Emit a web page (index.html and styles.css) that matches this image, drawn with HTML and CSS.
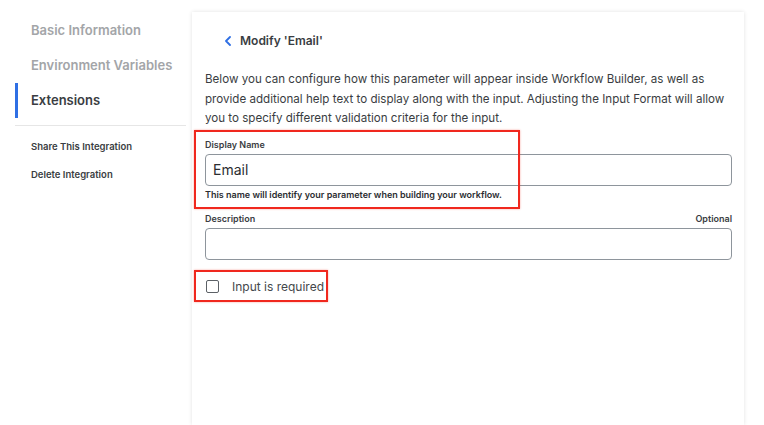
FILE: index.html
```html
<!DOCTYPE html>
<html lang="en">
<head>
    <meta charset="UTF-8">
    <title>Modify 'Email'</title>
    <link rel="stylesheet" href="styles.css">
</head>
<body>
    <div class="layout">
        <aside class="sidebar">
            <nav class="nav">
                <a class="nav-item">Basic Information</a>
                <a class="nav-item">Environment Variables</a>
                <a class="nav-item active">Extensions</a>
            </nav>
            <div class="divider"></div>
            <div class="actions">
                <a class="action-link">Share This Integration</a>
                <a class="action-link">Delete Integration</a>
            </div>
        </aside>

        <main class="card">
            <div class="card-header">
                <span class="back-btn">
                    <svg width="8" height="10" viewBox="0 0 8 10"><path d="M6 1 L2 5 L6 9" fill="none" stroke="#2f6fe4" stroke-width="1.8" stroke-linecap="round" stroke-linejoin="round"/></svg>
                </span>
                <h2>Modify 'Email'</h2>
            </div>
            <p class="intro">Below you can configure how this parameter will appear inside Workflow Builder, as well as provide additional help text to display along with the input. Adjusting the Input Format will allow you to specify different validation criteria for the input.</p>

            <div class="form-group">
                <div class="label-row">
                    <label for="display-name">Display Name</label>
                </div>
                <input type="text" id="display-name" value="Email">
                <div class="hint">This name will identify your parameter when building your workflow.</div>
                <div class="highlight highlight-name"></div>
            </div>

            <div class="form-group second">
                <div class="label-row">
                    <label for="description">Description</label>
                    <span class="optional">Optional</span>
                </div>
                <input type="text" id="description">
            </div>

            <div class="check-row">
                <span class="checkbox"></span>
                <span class="check-label">Input is required</span>
                <div class="highlight highlight-check"></div>
            </div>
        </main>
    </div>
</body>
</html>
```

FILE: styles.css
```css
body {
    margin: 0;
    background-color: #fff;
    font-family: Inter, "Liberation Sans", Arial, sans-serif;
    color: #333;
}
.layout {
    display: flex;
    height: 425px;
    overflow: hidden;
}
.sidebar {
    width: 171px;
    padding: 13px 0 0 15px;
    flex-shrink: 0;
}
.nav-item {
    display: block;
    height: 35px;
    line-height: 35px;
    padding-left: 13px;
    font-size: 13px;
    font-weight: 600;
    color: #a3a5a8;
    border-left: 3px solid transparent;
}
.nav-item.active {
    color: #3a3d42;
    border-left-color: #2f6fe4;
}
.divider {
    height: 1px;
    background-color: #e6e6e6;
    margin-top: 7px;
}
.actions {
    padding: 7px 0 0 16px;
}
.action-link {
    display: block;
    height: 28px;
    line-height: 28px;
    font-size: 9.5px;
    font-weight: 600;
    color: #3a3d42;
}
.card {
    position: relative;
    margin: 12px 0 0 6px;
    width: 527px;
    padding: 0 12px 0 13px;
    background-color: #fff;
    box-shadow: 0 0 4px rgba(0, 0, 0, 0.12);
}
.card-header {
    display: flex;
    align-items: center;
    height: 29px;
    margin-top: 14px;
    padding-left: 19px;
}
.back-btn {
    display: flex;
    margin-right: 8px;
}
.card-header h2 {
    margin: 0;
    font-size: 12px;
    font-weight: 600;
    color: #3a3d42;
}
.intro {
    margin: 15px 0 0;
    font-size: 11.6px;
    line-height: 19.5px;
    color: #3a3d42;
}
.form-group {
    position: relative;
    margin-top: 9px;
}
.form-group.second {
    margin-top: 12px;
}
.label-row {
    display: flex;
    justify-content: space-between;
    height: 13px;
    align-items: center;
}
.label-row label, .optional {
    font-size: 9px;
    font-weight: 600;
    color: #3a3d42;
}
.form-group input {
    display: block;
    box-sizing: border-box;
    width: 100%;
    height: 32px;
    margin-top: 3px;
    padding: 0 7px;
    border: 1px solid #8e959c;
    border-radius: 4px;
    font-family: inherit;
    font-size: 14px;
    color: #2b2d31;
}
.hint {
    margin-top: 3px;
    font-size: 9px;
    font-weight: 600;
    color: #2b2d31;
}
.check-row {
    position: relative;
    display: flex;
    align-items: center;
    margin-top: 20px;
    height: 14px;
}
.checkbox {
    width: 11px;
    height: 11px;
    border: 1.5px solid #5c6166;
    border-radius: 2px;
    margin-left: 1px;
}
.check-label {
    margin-left: 13px;
    font-size: 12px;
    color: #45484c;
}
.highlight {
    position: absolute;
    border: 2.5px solid #f0281e;
    box-shadow: 0 0 2px rgba(240, 40, 30, 0.4);
}
.highlight-name {
    left: -11px;
    top: -8px;
    width: 322px;
    height: 75px;
}
.highlight-check {
    left: -11px;
    top: -10px;
    width: 130px;
    height: 28px;
}
```
